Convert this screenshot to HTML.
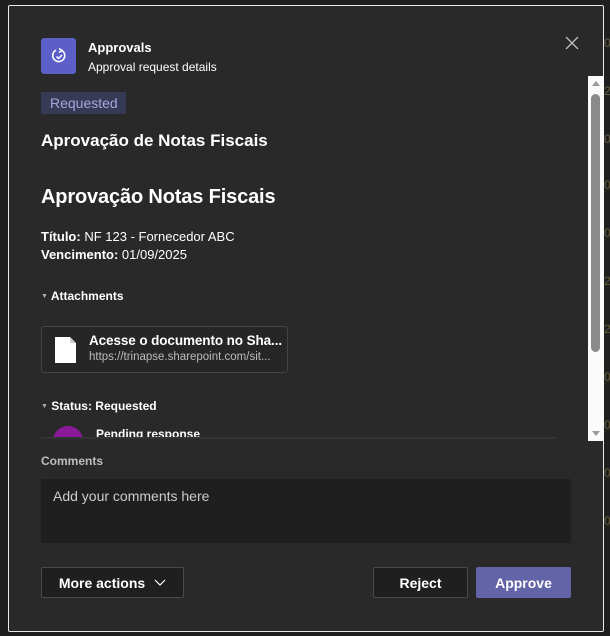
<!DOCTYPE html>
<html><head><style>
*{box-sizing:border-box;margin:0;padding:0}
body{width:610px;height:636px;background:#1f1f1f;font-family:"Liberation Sans",sans-serif;color:#fff;position:relative;overflow:hidden}
.dlg{position:absolute;left:8px;top:5px;width:596px;height:627px;background:#292929;border:1px solid #e8e8e8;border-radius:2px}
.a{position:absolute}
.sb{position:absolute;left:588px;top:76px;width:16px;height:365px;background:#fafafa}
.thumb{position:absolute;left:3px;top:18px;width:9px;height:258px;background:#8a8a8a;border-radius:5px}
.btn{position:absolute;top:567px;height:31px;border:1px solid #4a4a4a;background:#1f1f1f;font-weight:bold;font-size:14px;display:flex;align-items:center;justify-content:center;border-radius:2px}
.side{position:absolute;left:604px;color:#6a6040;font-size:12px}
</style></head><body>
<div class="side" style="top:36px">0</div><div class="side" style="top:84px">2</div><div class="side" style="top:132px">0</div><div class="side" style="top:178px">0</div><div class="side" style="top:226px">0</div><div class="side" style="top:274px">2</div><div class="side" style="top:322px">2</div><div class="side" style="top:370px">0</div><div class="side" style="top:418px">0</div><div class="side" style="top:466px">0</div><div class="side" style="top:514px">0</div>
<div class="dlg"></div>
<div class="a" style="left:41px;top:38px;width:35px;height:36px;background:#5b5fc7;border-radius:3px"></div>
<svg class="a" style="left:49px;top:46px" width="20" height="20" viewBox="0 0 20 20"><path d="M13 4.5A6 6 0 1 1 7 4.2" fill="none" stroke="#fff" stroke-width="1.6"/><path d="M10 2.5l3 2-3 2" fill="none" stroke="#fff" stroke-width="1.5"/><path d="M7.5 10.5l2 2 3.5-3.5" fill="none" stroke="#fff" stroke-width="1.5"/></svg>
<div class="a" style="left:88px;top:40px;font-size:13px;font-weight:bold">Approvals</div>
<div class="a" style="left:88px;top:60px;font-size:12px">Approval request details</div>
<svg class="a" style="left:565px;top:36px" width="14" height="14"><path d="M1 1L13 13M13 1L1 13" stroke="#bbb" stroke-width="1.4"/></svg>
<div class="a" style="left:41px;top:92px;width:85px;height:22px;background:#373a55;color:#a5a8e0;font-size:14px;line-height:22px;padding-left:9px">Requested</div>
<div class="a" style="left:41px;top:131px;font-size:17px;font-weight:bold">Aprovação de Notas Fiscais</div>
<div class="a" style="left:41px;top:186px;font-size:20px;font-weight:bold;letter-spacing:-0.15px">Aprovação Notas Fiscais</div>
<div class="a" style="left:41px;top:229px;font-size:13px"><b>Título:</b> NF 123 - Fornecedor ABC</div>
<div class="a" style="left:41px;top:247px;font-size:13px"><b>Vencimento:</b> 01/09/2025</div>
<div class="a" style="left:41px;top:289px;font-size:12px;font-weight:bold"><span style="font-size:7px;color:#aaa;vertical-align:2px">▼</span> Attachments</div>
<div class="a" style="left:41px;top:326px;width:247px;height:47px;border:1px solid #444;border-radius:3px;background:#262626"></div>
<svg class="a" style="left:55px;top:337px" width="21" height="26"><path d="M0 0H15L21 6V26H0Z" fill="#fff"/><path d="M15 0V6H21" fill="#ccc"/></svg>
<div class="a" style="left:89px;top:333px;font-size:13.5px;font-weight:bold;letter-spacing:-0.1px">Acesse o documento no Sha...</div>
<div class="a" style="left:89px;top:351px;font-size:11.5px;color:#bbb">https://trinapse.sharepoint.com/sit...</div>
<div class="a" style="left:41px;top:399px;font-size:12px;font-weight:bold"><span style="font-size:7px;color:#aaa;vertical-align:2px">▼</span> Status: Requested</div>
<div class="a" style="left:41px;top:420px;width:550px;height:17px;overflow:hidden"><div class="a" style="left:12px;top:6px;width:30px;height:30px;border-radius:50%;background:#8b1a9b"></div><div class="a" style="left:55px;top:7px;font-size:12px;font-weight:bold">Pending response</div></div>
<div class="a" style="left:41px;top:437px;width:515px;height:2px;background:#333"></div>
<div class="sb"><div class="a" style="left:4px;top:5px;width:0;height:0;border-left:4px solid transparent;border-right:4px solid transparent;border-bottom:5px solid #999"></div><div class="thumb"></div><div class="a" style="left:4px;bottom:5px;width:0;height:0;border-left:4px solid transparent;border-right:4px solid transparent;border-top:5px solid #999"></div></div>
<div class="a" style="left:41px;top:454px;font-size:12px;font-weight:bold;color:#bdbdbd">Comments</div>
<div class="a" style="left:41px;top:479px;width:530px;height:64px;background:#1f1f1f;padding:9px 12px;font-size:14px;color:#ccc">Add your comments here</div>
<div class="btn" style="left:41px;width:143px">More actions <svg style="margin-left:9px" width="12" height="8"><path d="M1 1L6 6L11 1" fill="none" stroke="#fff" stroke-width="1.2"/></svg></div>
<div class="btn" style="left:373px;width:95px">Reject</div>
<div class="btn" style="left:476px;width:95px;background:#6264a7;border-color:#6264a7">Approve</div>
</body></html>
